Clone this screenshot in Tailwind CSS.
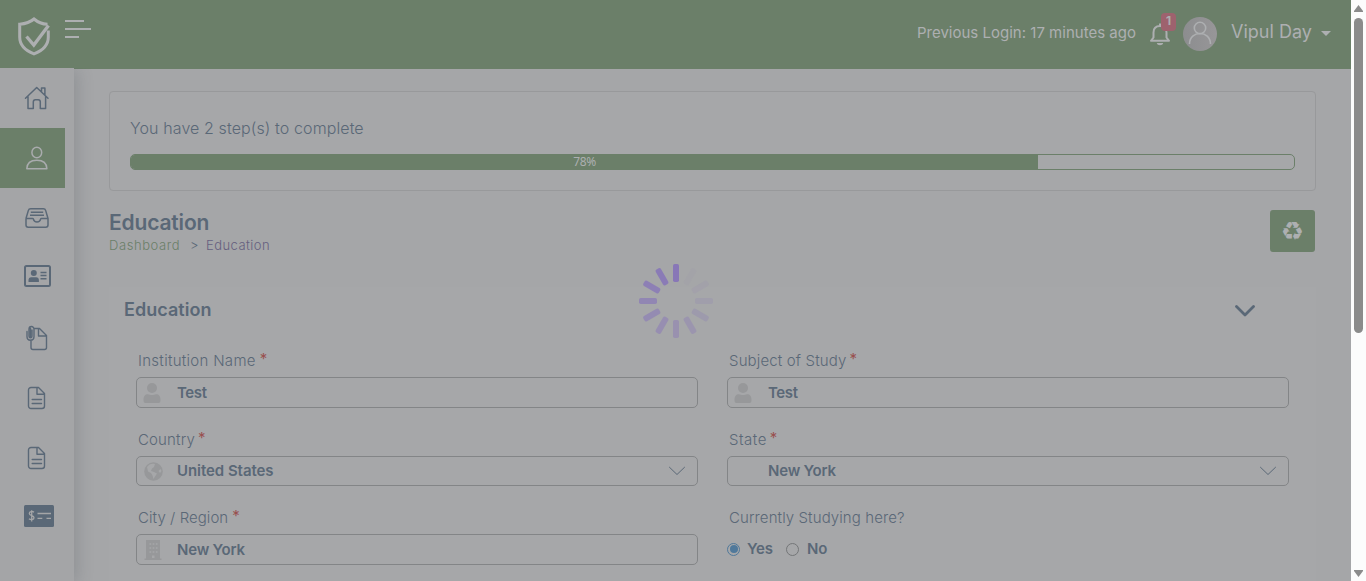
<!DOCTYPE html>
<html lang="en">
<head>
<meta charset="utf-8">
<title>Education</title>
<script src="https://cdn.jsdelivr.net/npm/@tailwindcss/browser@4"></script>
</head>
<body class="flex h-[581px] w-[1366px] overflow-hidden bg-[#a5a6a8] font-[Inter,'Liberation_Sans',sans-serif] text-[#5a6877]">
<svg class="hidden">
  <symbol id="doc" viewBox="0 0 20 24"><path d="M4 1.500h7.500l6 6V20a2.500 2.500 0 0 1-2.500 2.500H4A2.500 2.500 0 0 1 1.500 20V4A2.500 2.500 0 0 1 4 1.500zM10 1.500v6.800h7.500M5.200 13.500h9.300M5.200 17.500h9.300" fill="none" stroke="currentColor" stroke-width="1.400" stroke-linejoin="round" stroke-linecap="round"/></symbol>
  <symbol id="person" viewBox="0 0 18 20"><circle cx="9" cy="5" r="5"/><path d="M.5 17c0-4 1.500-5.800 4.500-5.800 2 .9 6 .9 8 0 3 0 4.500 1.800 4.500 5.800 0 2-.5 3-2 3h-13c-1.500 0-2-1-2-3z"/></symbol>
  <symbol id="caret" viewBox="0 0 18 10"><path d="M1.200 1 9 8.500 16.800 1" fill="none" stroke="currentColor" stroke-width="1"/></symbol>
</svg>
<div class="flex w-[1351px] flex-col">
  <header class="flex h-[69px] shrink-0 bg-[#6b7f69] text-[#adafb1]">
    <svg class="ml-[17px] mt-[16px] h-[40px] w-[34px]" viewBox="0 0 34 40" fill="none" stroke="currentColor" stroke-width="3"><path d="M30.500 8.300C25 8 20.500 6 17 3 13.500 6 9 7.700 2.700 8.200V21c0 7.500 5.500 13.500 14.300 16.800C25.800 34.500 31.300 28.500 31.300 21v-6.500"/><path d="M9.500 20.500 16.800 29 31.500 9.500" stroke-width="3.300"/></svg>
    <svg class="ml-[14px] mt-[19px] h-[20px] w-[27px]" viewBox="0 0 27 20"><path d="M0 2h19M0 10h26M0 18h14" stroke="currentColor" stroke-width="2"/></svg>
    <div class="ml-auto mt-[21px] h-6 text-[15px] leading-6 whitespace-nowrap"><span class="tracking-[0.01px]">Previous Login: 17 minutes ago</span></div>
    <div class="relative ml-[13px] mt-[22px] h-[24px] w-[22px]">
      <svg class="h-[24px] w-[22px]" viewBox="0 0 22 24" fill="none" stroke="currentColor" stroke-width="2"><path d="M2 18.800h18L17.500 15.500V10.500C17.500 6.500 15 4 11 4S4.500 6.500 4.500 10.500V15.500zM11 4V1.500" stroke-linejoin="round"/><path d="M7.800 21h6.400c-.5 3-5.900 3-6.400 0z" fill="currentColor" stroke="none"/></svg>
      <span class="absolute -top-[9px] left-[12px] flex h-[18px] w-[15px] items-center justify-center rounded-[4px] bg-[#9e626e] pb-0.5 text-[12px] font-bold">1</span>
    </div>
    <svg class="ml-[12px] mt-[17px] h-[34px] w-[34px]" viewBox="0 0 34 34" fill="none"><defs><linearGradient id="av"><stop stop-color="#8c8d8f"/><stop offset="1" stop-color="#979698"/></linearGradient></defs><circle cx="17" cy="17" r="17" fill="url(#av)"/><circle cx="17" cy="11" r="5.700" stroke="currentColor" stroke-width="1.600"/><path d="M6.500 27c0-14 21-14 21 0" stroke="currentColor" stroke-width="1.600"/></svg>
    <div class="ml-[14px] mt-[20px] w-[82px] text-[18px] leading-6 whitespace-nowrap"><span class="tracking-[0.02px]">Vipul Day</span></div>
    <svg class="ml-[8px] mr-[20px] mt-[31px] h-[5px] w-[10px]" viewBox="0 0 10 5"><path d="M0 0h10L5 5z" fill="currentColor"/></svg>
  </header>
  <div class="flex h-[512px]">
    <aside class="relative z-10 -mt-px flex h-[513px] w-[74px] shrink-0 flex-col bg-[#a4a5a7] shadow-[3px_2px_16px_0_rgba(50,60,70,0.2)] [clip-path:inset(0_-30px_0_0)]">
      <div class="flex h-[60px] items-center pl-[24px]"><svg class="h-[24px] w-[26px]" viewBox="0 0 26 24" fill="none" stroke="currentColor" stroke-width="1.500" stroke-linejoin="round" stroke-linecap="round"><path d="M1.500 12.300 12.700 1.500 24 12.300M4 10.500V22.500h5.300V16c0-1.600.8-2.300 2-2.300h3c1.200 0 2 .7 2 2.300v6.500h5.300V10.500M17.500 5.500V2h3.400v7"/></svg></div>
      <div class="flex h-[60px] w-[65px] items-center bg-[#6b7f69] pl-[26px] text-[#a9abad]"><svg class="h-[24px] w-[22px]" viewBox="0 0 22 24" fill="none" stroke="currentColor" stroke-width="1.500" stroke-linejoin="round"><ellipse cx="10.800" cy="6.500" rx="4.900" ry="5.200"/><path d="M.8 22.800C1 17 4.500 14.300 10.800 14.300S20.700 17 20.900 22.800z"/></svg></div>
      <div class="flex h-[60px] items-center pl-[25px]"><svg class="h-[20px] w-[24px]" viewBox="0 0 24 20" fill="none" stroke="currentColor" stroke-width="1.500" stroke-linejoin="round"><path d="M1 10.500 3.300 2.600C3.700 1.200 4.300.8 5.700.8h12.600c1.400 0 2 .4 2.400 1.800L23 10.500V17c0 1.300-.8 2.200-2.200 2.200H3.200C1.800 19.200 1 18.300 1 17V10.500h6.500c.5 0 .8.200.9.700.8 3.800 6.400 3.800 7.200 0 .1-.5.4-.7.900-.7H23M5.800 4.200h12.400M5 7.300h14"/></svg></div>
      <div class="flex h-[56px] items-center pl-[24px]"><svg class="h-[22px] w-[27px]" viewBox="0 0 27 22"><rect x="1" y="1" width="25" height="20" rx="1.500" fill="none" stroke="currentColor" stroke-width="2"/><circle cx="9.800" cy="8" r="3" fill="currentColor"/><path d="M4.500 17v-2c0-1.500 1-2.700 2.700-2.700h5c1.700 0 2.700 1.200 2.700 2.700v2z" fill="currentColor"/><path d="M16.500 7.400h6M16.500 10.600h6M16.500 13.800h6" stroke="currentColor" stroke-width="1.500"/></svg></div>
      <div class="mt-[4px] flex h-[60px] items-center pl-[26px]"><svg class="h-[26px] w-[22px]" viewBox="0 0 22 26" fill="none" stroke="currentColor" stroke-width="1.400" stroke-linejoin="round" stroke-linecap="round"><path d="M8 3.500h5.500l7 7V22.500a2 2 0 0 1-2 2H7a2 2 0 0 1-2-2V15M12.500 3.500v7.500h8M1 6.500v5c0 5 7 5 7 0V4.200c0-3.600-5-3.600-5 0v7c0 2 3 2 3 0V5M4.500 3.500v8"/></svg></div>
      <div class="flex h-[60px] items-center pl-[27px]"><svg class="h-[24px] w-[20px]"><use href="#doc"/></svg></div>
      <div class="flex h-[60px] items-center pl-[27px]"><svg class="h-[24px] w-[20px]"><use href="#doc"/></svg></div>
      <div class="flex h-[56px] items-center pl-[24px]"><svg class="h-[22px] w-[30px]" viewBox="0 0 30 22"><rect width="30" height="22" rx="1.500" fill="currentColor"/><path d="M10 7.200C8.500 6 5.300 6.200 5.300 8.500c0 2.700 4.700 1.700 4.700 4.200 0 2.200-3.500 2.300-5 1M7.700 5.200v11.300M13.500 8.500H27M13.500 13.300h4.800M22.500 13.300H27" fill="none" stroke="#a4a5a7" stroke-width="1.300"/></svg></div>
    </aside>
    <main class="w-[1277px] px-[35px] pt-[22px]">
      <section class="h-[100px] rounded-[4px] border border-[#98999b] bg-[#a6a7a9] px-[20px] pt-[24px]">
        <p class="h-6 text-[16px] leading-6 font-light whitespace-nowrap"><span class="tracking-[0.1px]">You have 2 step(s) to complete</span></p>
        <div class="mt-[14px] h-[16px] overflow-hidden rounded-[5px] border border-[#6b7f69]"><div class="-mt-px flex h-[16px] items-center justify-center bg-[#6b7f69] text-[11.500px] text-[#adafb1]" style="width:78%"><span class="font-['Noto_Sans',sans-serif] text-[12px] leading-4 tracking-[-0.4px]">78%</span></div></div>
      </section>
      <div class="mt-[19px] flex h-[42px] justify-between">
        <div>
          <h1 class="h-[24px] text-[21px] leading-[25px] font-semibold"><span class="tracking-[-0.17px]">Education</span></h1>
          <nav class="flex h-[22px] text-[13px] leading-[23px] font-light whitespace-nowrap"><span class="w-[81px] text-[#6b7f69]"><span class="tracking-[0.57px]">Dashboard</span></span><span class="w-[16px]">&gt;</span><span class="text-[#66607f]"><span class="tracking-[0.45px]">Education</span></span></nav>
        </div>
        <button class="mr-px flex h-[42px] w-[45px] items-center justify-center rounded-[3px] bg-[#6b7f69] font-['DejaVu_Sans',sans-serif] text-[26px] leading-none text-[#adafb1]">♻</button>
      </div>
      <section class="mt-[35px] h-[300px] bg-[#a6a7a9] pl-[27px] pr-[27px] pt-[11px]">
        <div class="-ml-[12px] flex h-[24px] items-center justify-between"><h2 class="text-[18px] leading-6 font-semibold"><span class="tracking-[0.04px]">Education</span></h2><svg class="mr-[34px] mt-px h-[14px] w-[20px]" viewBox="0 0 20 14"><path d="M1.500 2.500 10 11 18.500 2.500" fill="none" stroke="currentColor" stroke-width="2.800" stroke-linecap="round" stroke-linejoin="round"/></svg></div>
        <div class="mt-[27px] grid grid-cols-[562px_562px] gap-x-[29px] text-[15px] leading-6 whitespace-nowrap">
          <div class="h-[79px]"><label class="flex h-[28px] pl-[2px] font-light"><span class="tracking-[0.29px]">Institution Name</span><b class="-mt-[2px] ml-[4px] font-normal text-[#99504f]">*</b></label>
            <div class="flex h-[31px] items-center rounded-[5px] border border-[#838587] pl-[6px]"><svg class="h-[20px] w-[18px] fill-[#97989a]"><use href="#person"/></svg><span class="ml-[16px] font-semibold"><span class="tracking-[-0.4px]">Test</span></span></div></div>
          <div class="h-[79px]"><label class="flex h-[28px] pl-[2px] font-light"><span class="tracking-[0.15px]">Subject of Study</span><b class="-mt-[2px] ml-[3px] font-normal text-[#99504f]">*</b></label>
            <div class="flex h-[31px] items-center rounded-[5px] border border-[#838587] pl-[6px]"><svg class="h-[20px] w-[18px] fill-[#97989a]"><use href="#person"/></svg><span class="ml-[16px] font-semibold"><span class="tracking-[-0.4px]">Test</span></span></div></div>
          <div class="h-[78px]"><label class="flex h-[28px] pl-[2px] font-light"><span class="tracking-[0.15px]">Country</span><b class="-mt-[2px] ml-[3px] font-normal text-[#99504f]">*</b></label>
            <div class="flex h-[30px] items-center rounded-[5px] border border-[#838587] pl-[7px] pr-[11px]"><svg class="h-[19px] w-[19px]" viewBox="0 0 19 19"><circle cx="9.500" cy="9.500" r="9.300" fill="#97989a"/><path d="M3 5C5 2 8 1 11 2l-1 3-2 1.500L7 9l3 1 3 1.500-2 3-1.500 2.500-1-3.500L7 11 4 9.500zM14.500 9l2-2 1 2-1.500 2z" fill="#a6a7a9"/></svg><span class="ml-[14px] font-semibold"><span class="tracking-[-0.06px]">United States</span></span><svg class="ml-auto h-[10px] w-[18px]"><use href="#caret"/></svg></div></div>
          <div class="h-[78px]"><label class="flex h-[28px] pl-[2px] font-light"><span class="tracking-[0.5px]">State</span><b class="-mt-[2px] ml-[3px] font-normal text-[#99504f]">*</b></label>
            <div class="flex h-[30px] items-center rounded-[5px] border border-[#838587] pl-[40px] pr-[11px]"><span class="font-semibold"><span class="tracking-[-0.2px]">New York</span></span><svg class="ml-auto h-[10px] w-[18px]"><use href="#caret"/></svg></div></div>
          <div class="h-[79px]"><label class="flex h-[28px] pl-[2px] font-light"><span class="tracking-[0.06px]">City / Region</span><b class="-mt-[2px] ml-[4px] font-normal text-[#99504f]">*</b></label>
            <div class="flex h-[31px] items-center rounded-[5px] border border-[#838587] pl-[7px]"><svg class="h-[20px] w-[18px]" viewBox="0 0 18 20"><path d="M2 0h14v18.500h1.500V20H.5v-1.500H2z" fill="#97989a"/><path d="M5.500 4h8M5.500 8h8M5.500 12h8" stroke="#a6a7a9" stroke-width="1.700" stroke-dasharray="1.700 1.450"/><path d="M8 15.500h2.500V18H8z" fill="#a6a7a9"/></svg><span class="ml-[15px] font-semibold"><span class="tracking-[-0.2px]">New York</span></span></div></div>
          <div class="h-[79px]"><label class="flex h-[28px] pl-[2px] font-light"><span class="tracking-[0.1px]">Currently Studying here?</span></label>
            <div class="flex h-[30px] items-center font-semibold"><span class="flex h-[13px] w-[13px] items-center justify-center rounded-full border border-[#50799b]"><i class="h-[8px] w-[8px] rounded-full bg-[#50799b]"></i></span><span class="ml-[7px] w-[39px]"><span class="tracking-[-0.2px]">Yes</span></span><span class="h-[13px] w-[13px] rounded-full border border-[#747678]"></span><span class="ml-[8px]"><span class="tracking-[-0.2px]">No</span></span></div></div>
        </div>
      </section>
    </main>
  </div>
</div>
<div class="flex w-[15px] flex-col items-center bg-[#fcfcfc]">
  <svg class="mt-[5px] h-[7px] w-[9px]" viewBox="0 0 9 7"><path d="M4.500 0 9 6v1H0V6z" fill="#8b8b8b"/></svg>
  <div class="mt-[6px] h-[315px] w-[9px] rounded-full bg-[#8b8b8b]"></div>
  <svg class="mb-[4px] mt-auto h-[7px] w-[9px]" viewBox="0 0 9 7"><path d="M4.500 7 9 1V0H0v1z" fill="#8b8b8b"/></svg>
</div>
<svg class="absolute left-[636px] top-[261px] z-20 h-[80px] w-[80px]" viewBox="0 0 80 80" fill="#836fba">
  <rect x="37" y="3" width="6" height="18" rx="1.800" opacity=".85"/>
  <rect x="37" y="3" width="6" height="18" rx="1.800" opacity=".03" transform="rotate(30 40 40)"/>
  <rect x="37" y="3" width="6" height="18" rx="1.800" opacity=".09" transform="rotate(60 40 40)"/>
  <rect x="37" y="3" width="6" height="18" rx="1.800" opacity=".16" transform="rotate(90 40 40)"/>
  <rect x="37" y="3" width="6" height="18" rx="1.800" opacity=".24" transform="rotate(120 40 40)"/>
  <rect x="37" y="3" width="6" height="18" rx="1.800" opacity=".31" transform="rotate(150 40 40)"/>
  <rect x="37" y="3" width="6" height="18" rx="1.800" opacity=".38" transform="rotate(180 40 40)"/>
  <rect x="37" y="3" width="6" height="18" rx="1.800" opacity=".44" transform="rotate(210 40 40)"/>
  <rect x="37" y="3" width="6" height="18" rx="1.800" opacity=".51" transform="rotate(240 40 40)"/>
  <rect x="37" y="3" width="6" height="18" rx="1.800" opacity=".6" transform="rotate(270 40 40)"/>
  <rect x="37" y="3" width="6" height="18" rx="1.800" opacity=".7" transform="rotate(300 40 40)"/>
  <rect x="37" y="3" width="6" height="18" rx="1.800" opacity=".78" transform="rotate(330 40 40)"/>
</svg>
</body>
</html>
